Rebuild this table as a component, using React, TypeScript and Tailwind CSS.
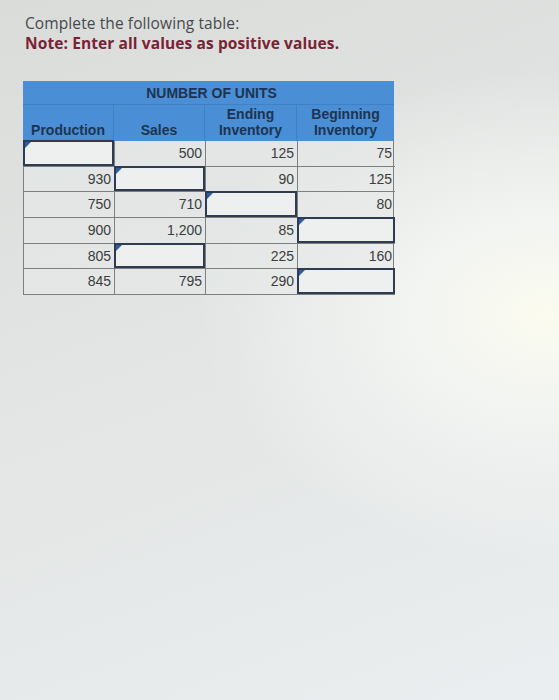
import React from "react";

type Cell = { v?: string; input?: boolean };

const rows: Cell[][] = [
  [{ input: true }, { v: "500" }, { v: "125" }, { v: "75" }],
  [{ v: "930" }, { input: true }, { v: "90" }, { v: "125" }],
  [{ v: "750" }, { v: "710" }, { input: true }, { v: "80" }],
  [{ v: "900" }, { v: "1,200" }, { v: "85" }, { input: true }],
  [{ v: "805" }, { input: true }, { v: "225" }, { v: "160" }],
  [{ v: "845" }, { v: "795" }, { v: "290" }, { input: true }],
];

function DataCell({ c, last }: { c: Cell; last: boolean }) {
  return (
    <div
      className={
        "relative h-[25.7px] border-b border-[#7d807f] " +
        (last ? "" : "border-r")
      }
    >
      {c.input ? (
        <div className="absolute -left-px -top-px right-0 bottom-0 border-2 border-[#2f3b4f] bg-[#edf0ef]">
          <div className="absolute left-0 top-0 h-0 w-0 border-t-[6px] border-r-[6px] border-t-[#2a5da6] border-r-transparent" />
        </div>
      ) : (
        <div className="flex h-full items-center justify-end pr-[3px] text-[14px] text-[#3b3d3e]">
          {c.v}
        </div>
      )}
    </div>
  );
}

export default function App() {
  return (
    <div
      className="relative h-[700px] w-[559px] overflow-hidden bg-[radial-gradient(ellipse_at_98%_45%,#fbfbef_0%,#f2f4f2_18%,transparent_45%),linear-gradient(160deg,#d9dcd9_0%,#e2e5e3_45%,#ebeef0_100%)]"
      style={{ fontFamily: '"Liberation Sans", Arial, sans-serif' }}
    >
      <div className="px-[25px] pt-[13px] font-['Open_Sans',sans-serif] text-[15.5px] leading-[20px] tracking-[0.1px]">
        <div className="text-[#474a4c]">Complete the following table:</div>
        <div className="font-bold text-[#7a2236]">
          Note: Enter all values as positive values.
        </div>
      </div>

      <div className="ml-[23px] mt-[28px] w-[371px]">
        <div className="bg-[#4a8ed5] text-[14px] font-bold text-[#1c3452]">
          <div className="flex h-[24px] items-center justify-center border-b border-[#3f7fc2] pl-[6px] pt-[2px]">
            NUMBER OF UNITS
          </div>
          <div className="grid h-[36px] grid-cols-[91px_91px_92px_97px] text-center leading-[16px]">
            <div className="flex items-end justify-center border-r border-[#3f7fc2] pb-[3px]">
              Production
            </div>
            <div className="flex items-end justify-center border-r border-[#3f7fc2] pb-[3px]">
              Sales
            </div>
            <div className="flex items-end justify-center border-r border-[#3f7fc2] pb-[3px]">
              Ending
              <br />
              Inventory
            </div>
            <div className="flex items-end justify-center pb-[3px]">
              Beginning
              <br />
              Inventory
            </div>
          </div>
        </div>
        <div className="grid grid-cols-[91px_91px_92px_97px] border-l border-r border-[#7d807f] bg-[#e6e9e7]/60">
          {rows.map((r, i) =>
            r.map((c, j) => <DataCell key={i + "-" + j} c={c} last={j === 3} />)
          )}
        </div>
      </div>
    </div>
  );
}
